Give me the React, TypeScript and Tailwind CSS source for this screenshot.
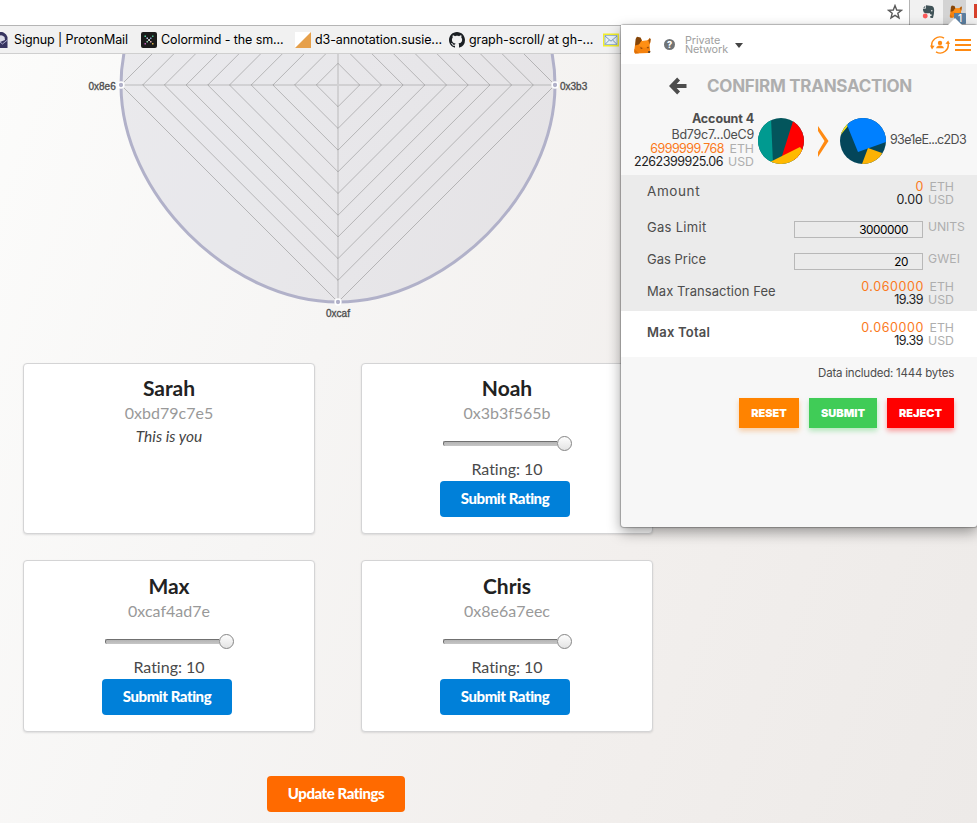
import React from "react";

const people = [
  { name: "Sarah", id: "0xbd79c7e5", you: true, pad: "" },
  { name: "Noah", id: "0x3b3f565b", you: false, pad: "" },
  { name: "Max", id: "0xcaf4ad7e", you: false, pad: "pt-px" },
  { name: "Chris", id: "0x8e6a7eec", you: false, pad: "pt-px" },
];

const levels = [1, 2, 3, 4, 5, 6, 7, 8, 9, 10];
const R = 217;
const H = R / 2;

function Fox({ size, className = "" }: { size: number; className?: string }) {
  return (
    <svg width={size} height={size} viewBox="0 0 18 18" className={className}>
      <path d="M3.5 1.5 L8 2.5 L9 5 L14 4.6 L17 2.2 L17.4 6 L16.6 9 L17.2 16 L15.5 17 L2 17.4 L1 16 L2 9 Z" fill="#f5820d" />
      <path d="M4 0.8 L7.6 1.4 L8.8 4.6 L6.4 8.2 L2.2 9.4 L2.6 3 Z" fill="#844509" />
      <path d="M16.8 1.8 L17.8 3.4 L16.8 8 L15.4 4.8 Z" fill="#9d5410" />
      <path d="M8.6 5 L15 4.8 L16.4 9 L12 12 L5.4 9.4 Z" fill="#ff8f14" />
      <path d="M7.4 11.2 L9.8 12.2 L7.8 12.8 Z M13.8 11.8 L15.8 10.8 L15.2 12.6 Z" fill="#5a2f0c" />
      <path d="M1.2 13 L6 17.3 L2 17.5 Z" fill="#dd7009" />
      <path d="M15.4 15 L17.4 15 L17 17 L14.8 16.8 Z" fill="#5a4634" />
    </svg>
  );
}

function Omnibar() {
  return (
    <div className="flex h-[25px] shrink-0 bg-white">
      <div className="flex flex-1 justify-end border-r border-[#b4b4b4] pr-[6px]">
        <svg width="16" height="16" viewBox="0 0 16 16" className="mt-[4px]">
          <path
            d="M8 1.6 L9.7 6 L14.4 6.3 L10.8 9.3 L12 13.9 L8 11.4 L4 13.9 L5.2 9.3 L1.6 6.3 L6.3 6 Z"
            fill="none"
            stroke="#5a5a5a"
            strokeWidth="1.4"
          />
        </svg>
      </div>
      <div className="flex w-[67px] bg-[#f1f1f1]">
        <svg width="14" height="16" viewBox="0 0 14 16" className="ml-[12px] mt-[4px]">
          <path d="M4.2 1 L10.4 1.6 Q12.6 2 12.8 6 Q12.8 11 11.6 14 Q10 15 8.4 13.6 Q8.4 11.6 10.2 12 L10.4 11 Q8 10.4 8 9 Q5 10 2 8.4 Q0.8 6.6 1 4.6 L4.2 4.4 Z" fill="#3f5257" />
          <path d="M3.4 1.4 L3.4 3.6 L1.2 3.6 Z" fill="#3f5257" />
          <circle cx="10.3" cy="6.6" r="0.8" fill="#f1f1f1" />
          <circle cx="3.4" cy="12.2" r="2.6" fill="#fb5a5a" />
        </svg>
        <div className="relative ml-[8px] h-[25px] w-[24px] bg-[#d3d3d3]">
          <Fox size={13} className="ml-[6px] mt-[5px]" />
          <div className="absolute right-0 bottom-[1px] flex h-[11px] w-[12px] items-center justify-center rounded-[1px] bg-[#5b7e9f] font-['Inter'] text-[10px] font-medium text-white">
            1
          </div>
        </div>
        <div className="ml-[8px] mt-[4px] h-[14px] w-[3px] bg-[#d6402b]" />
      </div>
    </div>
  );
}

function BookmarksBar() {
  return (
    <div className="flex h-[29px] shrink-0 items-center border-y border-t-[#b5b5b5] border-b-[#cfcfcf] bg-[#f1f1f1] font-['Inter',sans-serif] text-[12.5px] text-black">
      <svg width="8" height="16" viewBox="0 0 8 16" className="shrink-0">
        <path d="M-8 8 A8 8 0 0 1 7.5 5 L7.5 16 L-8 16 Z" fill="#37345f" />
        <path d="M-3 6.5 Q0 1 4.5 5 L5 8 L0 10 Z" fill="#dcdce8" />
        <path d="M0 10 L2.5 12 L7.5 8" fill="none" stroke="#a9a8c8" />
      </svg>
      <span className="ml-[6px] w-[127px] whitespace-nowrap pt-[2px] tracking-[-0.08px]">Signup | ProtonMail</span>
      <svg width="16" height="16" viewBox="0 0 16 16" className="shrink-0">
        <rect width="16" height="16" rx="2" fill="#1b1b1b" />
        <rect x="3.5" y="3.5" width="1.5" height="1.5" fill="#52d6a0" />
        <rect x="11" y="3.5" width="1.5" height="1.5" fill="#4dbb8d" />
        <rect x="5.5" y="5.5" width="1.5" height="1.5" fill="#b7c7e8" />
        <rect x="9" y="5.5" width="1.5" height="1.5" fill="#7fa1c9" />
        <rect x="7.2" y="7.2" width="1.7" height="1.7" fill="#ffffff" />
        <rect x="5.5" y="9" width="1.5" height="1.5" fill="#8fd0b0" />
        <rect x="9" y="9" width="1.5" height="1.5" fill="#d9a5b0" />
        <rect x="3.5" y="11" width="1.5" height="1.5" fill="#c05bb8" />
        <rect x="11" y="11" width="1.5" height="1.5" fill="#d9b24a" />
      </svg>
      <span className="ml-[4px] w-[134px] whitespace-nowrap pt-[2px] tracking-[-0.09px]">Colormind - the sm...</span>
      <svg width="16" height="16" viewBox="0 0 16 16" className="shrink-0">
        <rect width="16" height="16" fill="#fff" />
        <path d="M16 0 L16 16 L0 16 Z" fill="#e6a04b" />
      </svg>
      <span className="ml-[4px] w-[134px] whitespace-nowrap pt-[2px] tracking-[-0.09px]">d3-annotation.susie...</span>
      <svg width="16" height="16" viewBox="0 0 16 16" className="shrink-0">
        <path
          fill="#1b1f23"
          d="M8 0C3.58 0 0 3.58 0 8c0 3.54 2.29 6.53 5.47 7.59.4.07.55-.17.55-.38 0-.19-.01-.82-.01-1.49-2.01.37-2.53-.49-2.69-.94-.09-.23-.48-.94-.82-1.13-.28-.15-.68-.52-.01-.53.63-.01 1.08.58 1.23.82.72 1.21 1.87.87 2.33.66.07-.52.28-.87.51-1.07-1.78-.2-3.64-.89-3.64-3.95 0-.87.31-1.59.82-2.15-.08-.2-.36-1.02.08-2.12 0 0 .67-.21 2.2.82.64-.18 1.32-.27 2-.27s1.36.09 2 .27c1.53-1.04 2.2-.82 2.2-.82.44 1.1.16 1.92.08 2.12.51.56.82 1.27.82 2.15 0 3.07-1.87 3.75-3.65 3.95.29.25.54.73.54 1.48 0 1.07-.01 1.93-.01 2.2 0 .21.15.46.55.38A8.01 8.01 0 0 0 16 8c0-4.42-3.58-8-8-8z"
        />
      </svg>
      <span className="ml-[4px] w-[134px] whitespace-nowrap pt-[2px] tracking-[-0.09px]">graph-scroll/ at gh-...</span>
      <svg width="16" height="14" viewBox="0 0 16 14" className="shrink-0">
        <rect x="0.75" y="1.25" width="14.5" height="11.5" fill="#e9f1f8" stroke="#f2ee2a" strokeWidth="1.5" />
        <rect x="2" y="2.5" width="12" height="9" fill="none" stroke="#8aa9c6" strokeWidth="0.8" />
        <path d="M2 3 L8 8.2 L14 3 M2 11.4 L6.4 7 M14 11.4 L9.6 7" fill="none" stroke="#6f93b5" strokeWidth="0.9" />
      </svg>
    </div>
  );
}

function RadarChart() {
  return (
    <svg width="620" height="280" viewBox="0 54 620 280" className="block shrink-0">
      <g transform="translate(338 85)">
        <path
          d={`M0 ${-R} C${H} ${-R} ${R} ${-H} ${R} 0 C${R} ${H} ${H} ${R} 0 ${R} C${-H} ${R} ${-R} ${H} ${-R} 0 C${-R} ${-H} ${-H} ${-R} 0 ${-R}Z`}
          fill="#7a7aa0"
          fillOpacity="0.12"
          stroke="#b1b1c9"
          strokeWidth="3"
        />
        <path d={`M${-R} 0H${R}M0 ${-R}V${R}`} stroke="#808080" strokeOpacity="0.22" strokeWidth="2" />
        {levels.map((l) => {
          const r = (R * l) / 10;
          return (
            <path
              key={l}
              d={`M0 ${-r}L${r} 0L0 ${r}L${-r} 0Z`}
              fill="none"
              stroke="#808080"
              strokeOpacity="0.55"
              strokeWidth="0.9"
            />
          );
        })}
        {[[-R, 0], [R, 0], [0, R]].map(([x, y]) => (
          <circle key={`${x}${y}`} cx={x} cy={y} r="2.9" fill="#b1b1c9" stroke="#fff" strokeWidth="1.5" />
        ))}
      </g>
      <g fill="#505050" stroke="#505050" strokeWidth="0.35" fontSize="10" fontFamily="'Liberation Sans', Arial, sans-serif">
        <text x="88.5" y="90">0x8e6</text>
        <text x="560" y="90">0x3b3</text>
        <text x="338" y="317" textAnchor="middle">0xcaf</text>
      </g>
    </svg>
  );
}

function PersonCard({ name, id, you, pad }: { name: string; id: string; you: boolean; pad: string }) {
  return (
    <div className={`flex flex-col items-center rounded-[4px] border border-[#d4d4d5] bg-white shadow-[0_1px_2px_rgba(34,36,38,0.12)] ${pad}`}>
      <div className="mt-[10px] text-[21px] leading-[28px] font-bold text-[#222]">{name}</div>
      <div className="mt-px text-[16px] leading-[20px] text-[#999]">{id}</div>
      {you ? (
        <div className="mt-[3px] text-[15.5px] leading-[20px] text-[#444] italic">This is you</div>
      ) : (
        <>
          <div className="mt-[13px] flex h-[15px] w-[129px] items-center">
            <div className="h-[5px] flex-1 rounded-l-[2px] border-t border-l border-[#707070] bg-linear-to-b from-[#b4b4b4] to-[#c6c6c6]" />
            <div className="h-[15px] w-[15px] rounded-full border border-[#858585] bg-linear-to-b from-[#fdfdfd] to-[#e4e4e4]" />
          </div>
          <div className="mt-[8px] text-[16px] leading-[20px] text-[#4a4a4a] [font-variant-ligatures:none]">Rating: 10</div>
          <button className="mt-[2px] mr-[4px] h-[36px] w-[130px] rounded-[4px] bg-[#0080d9] pb-[2px] text-[15px] font-black tracking-[-0.45px] text-white">
            Submit Rating
          </button>
        </>
      )}
    </div>
  );
}

function Value({
  value,
  unit,
  orange = false,
  tracking = "",
}: {
  value: string;
  unit: string;
  orange?: boolean;
  tracking?: string;
}) {
  return (
    <div className="flex justify-end text-[12.5px] leading-[13px]">
      <span className={`${orange ? "mr-[-1px] text-[#fb7a1c]" : "text-[#222]"} ${tracking}`}>{value}</span>
      <span className="ml-[5px] w-[26px] text-right text-[12.3px] text-[#aeaeae]">{unit}</span>
    </div>
  );
}

function Popup() {
  return (
    <div className="absolute top-[25px] left-[621px] flex h-[502px] w-[356px] flex-col rounded-[3px] bg-[#f7f7f7] font-['Inter','Open_Sans',sans-serif] shadow-[0_0_1px_1px_rgba(0,0,0,0.25),0_5px_14px_rgba(0,0,0,0.38)]">
      <svg width="14" height="7" viewBox="0 0 14 7" className="absolute -top-[7px] left-[327px]">
        <path d="M0 7 L7 0 L14 7Z" fill="#fff" />
      </svg>
      <div className="flex h-[39px] shrink-0 items-center bg-white">
        <Fox size={18} className="ml-[12px]" />
        <div className="ml-[13px] flex h-[11px] w-[11px] items-center justify-center rounded-full bg-[#707476] text-[9px] leading-none font-extrabold text-white">?</div>
        <div className="ml-[10px] w-[50px] text-[10.8px] leading-[9px] tracking-[-0.05px] text-[#a0a0a0]">
          Private
          <br />
          Network
        </div>
        <div className="mt-[2px] h-0 w-0 border-x-[4px] border-t-[5px] border-x-transparent border-t-[#444]" />
        <svg width="20" height="20" viewBox="0 0 20 20" className="ml-auto">
          <g fill="none" stroke="#ff8a12" strokeWidth="1.4">
            <path d="M2.2 12.5 A8 8 0 0 1 14 3.2" />
            <path d="M17.8 7.5 A8 8 0 0 1 6 16.8" />
          </g>
          <path d="M0 10.5 L4.6 10.8 L2 14.4 Z M20 9 L15.4 8.8 L18.2 5.4 Z" fill="#ff8a12" />
          <circle cx="10" cy="7.9" r="2.2" fill="#ff8a12" />
          <path d="M6 13.2 Q6.4 11.2 9 10.6 L11 10.6 Q13.6 11.2 14 13.2 Z" fill="#ff8a12" />
        </svg>
        <div className="mr-[6px] ml-[5px] flex w-[16px] flex-col gap-[3px]">
          <div className="h-[2px] bg-[#ff8a12]" />
          <div className="h-[2px] bg-[#ff8a12]" />
          <div className="h-[2px] bg-[#ff8a12]" />
        </div>
      </div>
      <div className="flex h-[44px] shrink-0 items-center">
        <svg width="18" height="18" viewBox="0 0 18 18" className="ml-[48px]">
          <path d="M9.6 2 L2.8 9 L9.6 16 M3.5 9 L17.5 9" fill="none" stroke="#4d4d4d" strokeWidth="4" strokeLinejoin="miter" />
        </svg>
        <div className="mt-[2px] ml-[20px] text-[17px] font-bold tracking-[-0.27px] whitespace-nowrap text-[#aeaeae]">CONFIRM TRANSACTION</div>
      </div>
      <div className="flex h-[67px] shrink-0">
        <div className="mt-[3px] w-[133px] text-right">
          <div className="text-[12.5px] leading-[16px] font-bold tracking-[-0.1px] text-[#4d4d4d]">Account 4</div>
          <div className="text-[12.5px] leading-[15px] tracking-[-0.25px] text-[#4d4d4d]">Bd79c7...0eC9</div>
          <Value value="6999999.768" unit="ETH" orange tracking="tracking-[-0.55px]" />
          <Value value="2262399925.06" unit="USD" tracking="tracking-[-0.5px]" />
        </div>
        <svg width="46" height="46" viewBox="0 0 46 46" className="mt-[10px] ml-[4px]">
          <defs>
            <clipPath id="disc"><circle cx="23" cy="23" r="23" /></clipPath>
          </defs>
          <g clipPath="url(#disc)">
            <rect width="46" height="46" fill="#03555c" />
            <path d="M0 0 L13 0 L15 46 L0 46Z" fill="#009a90" />
            <path d="M36 0 L46 0 L46 46 L24 38Z" fill="#ff0000" />
            <path d="M12 44 L42 29 L46 34 L46 46 L12 46Z" fill="#ffb900" />
          </g>
        </svg>
        <svg width="12" height="32" viewBox="0 0 12 32" className="mt-[18px] ml-[13px]">
          <path d="M1 0 L11.5 15 L1 31 L1 26 L7.5 15 L1 5Z" fill="#ff8a12" />
        </svg>
        <svg width="46" height="46" viewBox="0 0 46 46" className="mt-[10px] ml-[11px]">
          <g clipPath="url(#disc)">
            <rect width="46" height="46" fill="#04465a" />
            <path d="M0 6 L8 6 L8 8 L3 14 L0 18Z" fill="#f4e11c" />
            <path d="M7 7 L18 -4 L46 0 L46 24 L18 34Z" fill="#0080ff" />
            <path d="M28 30 L42 35 L38 46 L22 46Z" fill="#fcb205" />
          </g>
        </svg>
        <div className="mt-[24px] ml-[4px] text-[12.5px] leading-[16px] tracking-[-0.66px] text-[#4d4d4d]">93e1eE...c2D3</div>
      </div>
      <div className="flex h-[136px] shrink-0 flex-col bg-[#ebebeb] pl-[26px] text-[13px] leading-[16px] text-[#4d4d4d]">
        <div className="flex h-[37px] justify-between pt-[5px] pr-[23px]">
          <div className="pt-[3px] text-[13.5px] tracking-[0.6px]">Amount</div>
          <div>
            <Value value="0" unit="ETH" orange tracking="tracking-[0.5px]" />
            <Value value="0.00" unit="USD" />
          </div>
        </div>
        <div className="flex h-[32px]">
          <div className="w-[147px] pt-[7px] tracking-[0.3px]">Gas Limit</div>
          <div className="mt-[9px] h-[17px] w-[129px] border border-[#b8b8b8] pr-[14px] text-right font-['Inter'] text-[11.8px] leading-[17px] tracking-[-0.45px] text-black">3000000</div>
          <div className="ml-[5px] pt-[7px] text-[12.2px] tracking-[-0.1px] text-[#aeaeae]">UNITS</div>
        </div>
        <div className="flex h-[32px]">
          <div className="w-[147px] pt-[7px]">Gas Price</div>
          <div className="mt-[9px] h-[17px] w-[129px] border border-[#b8b8b8] pr-[14px] text-right font-['Inter'] text-[11.8px] leading-[17px] tracking-[-0.45px] text-black">20</div>
          <div className="ml-[5px] pt-[7px] text-[12.2px] tracking-[0.1px] text-[#aeaeae]">GWEI</div>
        </div>
        <div className="flex justify-between pt-[4px] pr-[23px]">
          <div className="pt-[3px] tracking-[0.05px]">Max Transaction Fee</div>
          <div>
            <Value value="0.060000" unit="ETH" orange tracking="tracking-[0.6px]" />
            <Value value="19.39" unit="USD" tracking="tracking-[-0.5px]" />
          </div>
        </div>
      </div>
      <div className="flex h-[46px] shrink-0 justify-between bg-white pt-[10px] pr-[23px] pl-[26px]">
        <div className="pt-[3px] text-[13px] leading-[16px] font-semibold tracking-[0.22px] text-[#4d4d4d]">Max Total</div>
        <div>
          <Value value="0.060000" unit="ETH" orange tracking="tracking-[0.6px]" />
          <Value value="19.39" unit="USD" tracking="tracking-[-0.5px]" />
        </div>
      </div>
      <div className="mt-[8px] pr-[23px] text-right text-[11.5px] leading-[16px] tracking-[-0.22px] text-[#4d4d4d]">Data included: 1444 bytes</div>
      <div className="mt-[17px] flex justify-end gap-[10px] pr-[23px] text-[11px] font-black text-white">
        <button className="h-[30px] w-[60px] bg-[#ff8300] shadow-[0_3px_5px_rgba(247,134,28,0.36)]">RESET</button>
        <button className="h-[30px] w-[68px] bg-[#40cc57] shadow-[0_3px_5px_rgba(64,204,87,0.36)]">SUBMIT</button>
        <button className="h-[30px] w-[67px] bg-[#ff0000] shadow-[0_3px_5px_rgba(255,0,0,0.36)]">REJECT</button>
      </div>
    </div>
  );
}

export default function App() {
  return (
    <div className="relative flex h-[823px] w-[977px] flex-col overflow-hidden bg-[linear-gradient(110deg,#fcfcfb_0%,#f6f5f4_35%,#f2efed_65%,#edeae8_100%)] font-['Lato',sans-serif]">
      <Omnibar />
      <BookmarksBar />
      <RadarChart />
      <div className="mt-[29px] ml-[23px] grid w-[630px] shrink-0 grid-cols-2 grid-rows-[171px_172px] gap-x-[46px] gap-y-[26px]">
        {people.map((p) => (
          <PersonCard key={p.id} {...p} />
        ))}
      </div>
      <button className="mt-[44px] ml-[267px] h-[36px] w-[138px] shrink-0 rounded-[4px] bg-[#ff6a00] pb-[2px] text-[15px] font-black tracking-[-0.45px] text-white">
        Update Ratings
      </button>
      <Popup />
    </div>
  );
}
